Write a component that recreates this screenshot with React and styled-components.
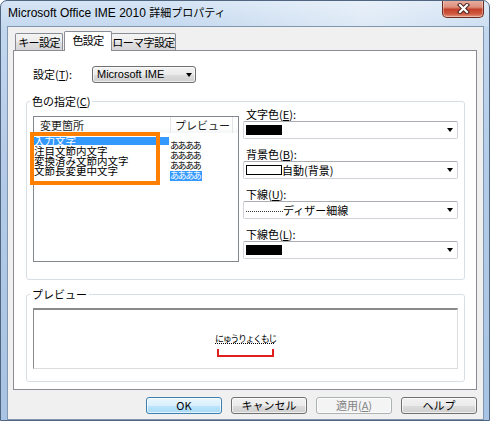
import React from "react";
import styled, { createGlobalStyle } from "styled-components";

const GlobalStyle = createGlobalStyle`
  html, body {
    margin: 0;
    padding: 0;
    background: #ffffff;
  }
  body {
    font-family: "Noto Sans CJK JP", "Noto Sans", sans-serif;
    font-size: 11px;
    color: #000;
  }
  * {
    box-sizing: border-box;
  }
`;

const Window = styled.div`
  position: relative;
  width: 490px;
  height: 421px;
  border: 1px solid #4f6580;
  border-radius: 7px 7px 0 0;
  background: linear-gradient(180deg, #d6e5f5 0%, #c2d7ee 7%, #b3cbe7 40%, #a8c3e3 100%);
  display: flex;
  flex-direction: column;
  overflow: hidden;
`;

const TitleBar = styled.div`
  flex: none;
  height: 25px;
  display: flex;
  align-items: center;
  padding: 0 0 1px 7px;
  background: linear-gradient(90deg, rgba(255, 255, 255, 0) 35%, rgba(255, 255, 255, 0.45) 75%, rgba(255, 255, 255, 0.15) 100%);
`;

const Title = styled.span`
  font: 12px/14px "Liberation Sans", "Noto Sans CJK JP", sans-serif;
  color: #000;
  .jp {
    font-size: 11px;
  }
`;

const CloseBtn = styled.div`
  position: absolute;
  top: -1px;
  right: 5px;
  width: 42px;
  height: 18px;
  border: 1px solid #6b2b20;
  border-top: none;
  border-radius: 0 0 5px 5px;
  background: linear-gradient(180deg, #eab0a2 0%, #dc8e7b 42%, #c4412b 55%, #cf5a3f 82%, #e39a84 100%);
  box-shadow: inset 0 0 0 1px rgba(255, 255, 255, 0.35);
  display: flex;
  align-items: center;
  justify-content: center;
`;

const Client = styled.div`
  flex: 1;
  margin: 0 5px 6px 6px;
  border: 1px solid #8197b0;
  background: #f0f0f0;
  display: flex;
  flex-direction: column;
  padding: 4px 6px 5px 5px;
`;

const TabRow = styled.div`
  flex: none;
  height: 19px;
  display: flex;
  align-items: flex-end;
  padding-left: 2px;
  position: relative;
  z-index: 1;
`;

const Tab = styled.div`
  width: ${(p) => p.$w}px;
  height: ${(p) => (p.$active ? 20 : 17)}px;
  margin-bottom: ${(p) => (p.$active ? -1 : 0)}px;
  margin-left: ${(p) => p.$ml || 0}px;
  border: 1px solid #898c95;
  border-bottom: none;
  border-radius: 2px 2px 0 0;
  background: ${(p) =>
    p.$active ? "#ffffff" : "linear-gradient(180deg, #f4f4f4 0%, #ececec 50%, #e0e0e0 51%, #d6d6d6 100%)"};
  position: relative;
  z-index: ${(p) => (p.$active ? 2 : 1)};
  display: flex;
  align-items: center;
  justify-content: center;
  font-size: 11px;
  line-height: 13px;
  letter-spacing: -0.6px;
  white-space: nowrap;
  padding-bottom: ${(p) => (p.$active ? 2 : 0)}px;
`;

const Panel = styled.div`
  flex: 1;
  border: 1px solid #898c95;
  background: #ffffff;
  padding: 15px 11px 7px 12px;
  display: flex;
  flex-direction: column;
`;

const SettingRow = styled.div`
  height: 17px;
  display: flex;
  align-items: center;
  padding-left: 7px;
`;

const SettingLabel = styled.span`
  width: 59px;
  font-size: 11px;
  line-height: 13px;
`;

const Combo = styled.div`
  width: 104px;
  height: 17px;
  border: 1px solid #707070;
  border-radius: 3px;
  background: linear-gradient(180deg, #f2f2f2 0%, #ebebeb 50%, #dddddd 51%, #cfcfcf 100%);
  box-shadow: inset 0 0 0 1px rgba(255, 255, 255, 0.6);
  display: flex;
  align-items: center;
  padding-left: 4px;
  font: 11px/13px "Liberation Sans", sans-serif;
`;

const Arrow = styled.span`
  margin-left: auto;
  margin-right: ${(p) => p.$mr}px;
  width: 0;
  height: 0;
  border-left: 3.5px solid transparent;
  border-right: 3.5px solid transparent;
  border-top: 4px solid #000;
`;

const Group = styled.fieldset`
  width: 439px;
  margin: ${(p) => p.$mt}px 0 0 0;
  padding: 0 6px ${(p) => p.$pb}px 6px;
  border: 1px solid #d5dfe5;
  border-radius: 3px;
  min-width: 0;
`;

const Legend = styled.legend`
  padding: 0 2px;
  margin-left: -3px;
  font-size: 11px;
  line-height: 14px;
`;

const GroupBody = styled.div`
  display: flex;
  align-items: flex-start;
`;

const ListBox = styled.div`
  position: relative;
  width: 206px;
  height: 146px;
  margin-top: 8px;
  border: 1px solid #828790;
  background: #ffffff;
`;

const HeaderRow = styled.div`
  display: flex;
  height: 16px;
  background: linear-gradient(180deg, #ffffff 0%, #ffffff 60%, #f5f6f7 100%);
`;

const HeaderCell = styled.div`
  width: ${(p) => p.$w}px;
  border-right: 1px solid #e3e5e8;
  padding-left: ${(p) => p.$pl}px;
  font-size: 11px;
  line-height: 16px;
  color: #1e1e1e;
`;

const Rows = styled.div`
  padding-top: 3px;
`;

const Row = styled.div`
  display: flex;
  height: 10px;
`;

const NameCell = styled.div`
  width: 135px;
  font-size: 10.5px;
  line-height: 10px;
  white-space: nowrap;
  color: ${(p) => (p.$selected ? "#ffffff" : "#000")};
  background: ${(p) =>
    p.$selected ? "linear-gradient(#3399ff, #3399ff) 0 1px / 100% 8px no-repeat" : "transparent"};
`;

const PreviewCell = styled.div`
  margin-left: 1px;
  width: 62px;
`;

const PreviewText = styled.span`
  display: inline-block;
  font-size: 9px;
  line-height: 10px;
  letter-spacing: -1.4px;
  white-space: nowrap;
  color: ${(p) => (p.$hl ? "#ffffff" : "#000")};
  background: ${(p) => (p.$hl ? "#3399ff" : "transparent")};
  padding-right: ${(p) => (p.$hl ? 2 : 0)}px;
`;

const Annotation = styled.div`
  position: absolute;
  left: -4px;
  top: 15px;
  width: 130px;
  height: 53px;
  border: 4px solid #ff8000;
  pointer-events: none;
`;

const FieldColumn = styled.div`
  width: 215px;
  margin-left: 4px;
  display: flex;
  flex-direction: column;
`;

const Field = styled.div`
  display: flex;
  flex-direction: column;
  margin-bottom: 9px;
`;

const FieldLabel = styled.div`
  font-size: 11px;
  line-height: 13px;
  padding-left: 3px;
`;

const Dropdown = styled.div`
  height: 18px;
  border: 1px solid #d0d4da;
  border-top-color: #abadb3;
  border-radius: 2px;
  background: #ffffff;
  display: flex;
  align-items: center;
  padding-left: 2px;
  font-size: 11px;
  line-height: 13px;
`;

const Swatch = styled.span`
  width: 36px;
  height: 10px;
  background: ${(p) => p.$color};
  border: 1px solid #000;
`;

const DotLine = styled.span`
  width: 37px;
  height: 0;
  border-top: 1px dotted #333;
  margin-top: 2px;
`;

const PreviewBox = styled.div`
  height: 61px;
  border: 1px solid #dcdcdc;
  border-top: 2px solid #8a8a8a;
  border-left: 1px solid #8a8a8a;
  margin-top: 7px;
  display: flex;
  flex-direction: column;
  align-items: center;
  padding-top: 23px;
  background: #ffffff;
`;

const SampleText = styled.span`
  font-size: 9px;
  line-height: 12px;
  letter-spacing: -1.4px;
  text-decoration: underline dotted;
  text-underline-offset: 1px;
`;

const Bracket = styled.div`
  width: 57px;
  height: 8px;
  margin-top: 4px;
  border: 2px solid #e0201c;
  border-top: none;
`;

const ButtonRow = styled.div`
  flex: none;
  margin-top: 7px;
  display: flex;
  justify-content: flex-end;
  gap: 9px;
`;

const Btn = styled.div`
  width: 76px;
  height: 17px;
  border: 1px solid ${(p) => (p.$default ? "#3c7fb1" : p.$disabled ? "#adb2b5" : "#707070")};
  border-radius: 3px;
  background: ${(p) =>
    p.$default
      ? "linear-gradient(180deg, #eaf6fd 0%, #d9f0fc 50%, #bee6fd 51%, #a7d9f5 100%)"
      : p.$disabled
      ? "#f4f4f4"
      : "linear-gradient(180deg, #f2f2f2 0%, #ebebeb 50%, #dddddd 51%, #cfcfcf 100%)"};
  box-shadow: inset 0 0 0 1px rgba(255, 255, 255, 0.65);
  color: ${(p) => (p.$disabled ? "#838383" : "#000")};
  display: flex;
  align-items: center;
  justify-content: center;
  font-size: 11px;
  line-height: 13px;
`;

const rows = [
  { name: "入力文字", selected: true },
  { name: "注目文節内文字" },
  { name: "変換済み文節内文字" },
  { name: "文節長変更中文字", hl: true },
];

export default function App() {
  return (
    <>
      <GlobalStyle />
      <Window>
        <TitleBar>
          <Title>
            Microsoft Office IME 2010 <span className="jp">詳細プロパティ</span>
          </Title>
        </TitleBar>
        <CloseBtn>
          <svg width="13" height="11" viewBox="0 0 13 11">
            <path d="M3 2 L10 9 M10 2 L3 9" stroke="#4a2520" strokeWidth="4.2" strokeLinecap="square" />
            <path d="M3 2 L10 9 M10 2 L3 9" stroke="#ffffff" strokeWidth="2.2" strokeLinecap="square" />
          </svg>
        </CloseBtn>

        <Client>
          <TabRow>
            <Tab $w={48}>キー設定</Tab>
            <Tab $w={48} $ml={1} $active>
              色設定
            </Tab>
            <Tab $w={65} $ml={-1}>
              ローマ字設定
            </Tab>
          </TabRow>

          <Panel>
            <SettingRow>
              <SettingLabel>
                設定(<u>T</u>):
              </SettingLabel>
              <Combo>
                Microsoft IME
                <Arrow $mr={3} />
              </Combo>
            </SettingRow>

            <Group $mt={11} $pb={11}>
              <Legend>
                色の指定(<u>C</u>)
              </Legend>
              <GroupBody>
                <ListBox>
                  <HeaderRow>
                    <HeaderCell $w={137} $pl={6}>
                      変更箇所
                    </HeaderCell>
                    <HeaderCell $w={62} $pl={4}>
                      プレビュー
                    </HeaderCell>
                  </HeaderRow>
                  <Rows>
                    {rows.map((r) => (
                      <Row key={r.name}>
                        <NameCell $selected={r.selected}>{r.name}</NameCell>
                        <PreviewCell>
                          <PreviewText $hl={r.hl}>ああああ</PreviewText>
                        </PreviewCell>
                      </Row>
                    ))}
                  </Rows>
                  <Annotation />
                </ListBox>

                <FieldColumn>
                  <Field>
                    <FieldLabel>
                      文字色(<u>E</u>):
                    </FieldLabel>
                    <Dropdown>
                      <Swatch $color="#000" />
                      <Arrow $mr={4} />
                    </Dropdown>
                  </Field>
                  <Field>
                    <FieldLabel>
                      背景色(<u>B</u>):
                    </FieldLabel>
                    <Dropdown>
                      <Swatch $color="#fff" />
                      自動(背景)
                      <Arrow $mr={4} />
                    </Dropdown>
                  </Field>
                  <Field>
                    <FieldLabel>
                      下線(<u>U</u>):
                    </FieldLabel>
                    <Dropdown>
                      <DotLine />
                      ディザー細線
                      <Arrow $mr={4} />
                    </Dropdown>
                  </Field>
                  <Field>
                    <FieldLabel>
                      下線色(<u>L</u>):
                    </FieldLabel>
                    <Dropdown>
                      <Swatch $color="#000" />
                      <Arrow $mr={4} />
                    </Dropdown>
                  </Field>
                </FieldColumn>
              </GroupBody>
            </Group>

            <Group $mt={7} $pb={12}>
              <Legend>プレビュー</Legend>
              <PreviewBox>
                <SampleText>にゅうりょくもじ</SampleText>
                <Bracket />
              </PreviewBox>
            </Group>
          </Panel>

          <ButtonRow>
            <Btn $default>OK</Btn>
            <Btn>キャンセル</Btn>
            <Btn $disabled>
              適用(<u>A</u>)
            </Btn>
            <Btn>ヘルプ</Btn>
          </ButtonRow>
        </Client>
      </Window>
    </>
  );
}
